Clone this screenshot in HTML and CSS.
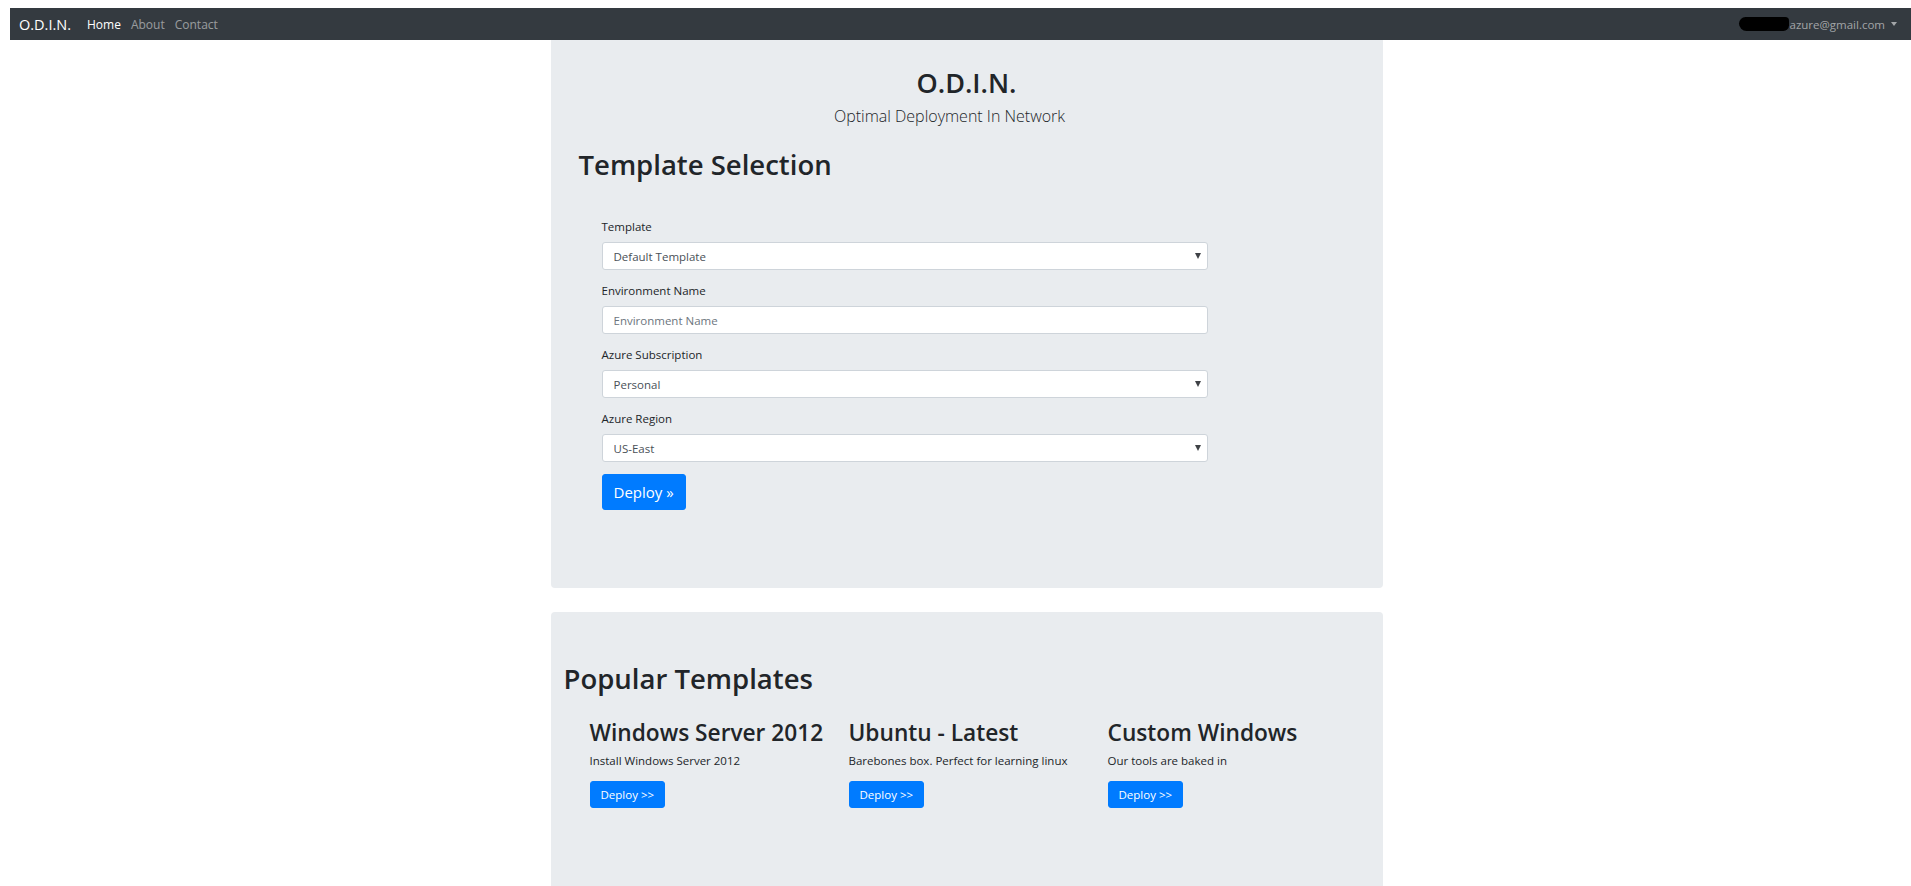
FILE: index.html
```html
<!DOCTYPE html>
<html lang="en">
<head>
    <meta charset="UTF-8">
    <meta name="viewport" content="width=device-width, initial-scale=1.0">
    <title>O.D.I.N.</title>
    <link rel="stylesheet" href="styles.css">
</head>
<body>
    <nav class="navbar">
        <a class="brand" href="#">O.D.I.N.</a>
        <ul class="nav-links">
            <li><a class="active" href="#">Home</a></li>
            <li><a href="#">About</a></li>
            <li><a href="#">Contact</a></li>
        </ul>
        <div class="user">
            <span class="redact"></span>azure@gmail.com<span class="caret"></span>
        </div>
    </nav>

    <main class="container">
        <section class="jumbotron selection">
            <div class="hero">
                <h1>O.D.I.N.</h1>
                <p class="lead">Optimal Deployment In Network</p>
            </div>
            <h2>Template Selection</h2>

            <form class="deploy-form">
                <div class="form-group">
                    <label for="template">Template</label>
                    <div class="select-wrap">
                        <select id="template" class="form-control">
                            <option>Default Template</option>
                        </select>
                    </div>
                </div>
                <div class="form-group">
                    <label for="envName">Environment Name</label>
                    <input type="text" id="envName" class="form-control" placeholder="Environment Name">
                </div>
                <div class="form-group">
                    <label for="subscription">Azure Subscription</label>
                    <div class="select-wrap">
                        <select id="subscription" class="form-control">
                            <option>Personal</option>
                        </select>
                    </div>
                </div>
                <div class="form-group">
                    <label for="region">Azure Region</label>
                    <div class="select-wrap">
                        <select id="region" class="form-control">
                            <option>US-East</option>
                        </select>
                    </div>
                </div>
                <button type="button" class="btn btn-lg">Deploy &raquo;</button>
            </form>
        </section>

        <section class="jumbotron popular">
            <h2>Popular Templates</h2>
            <div class="row">
                <div class="col">
                    <h3>Windows Server 2012</h3>
                    <p>Install Windows Server 2012</p>
                    <a class="btn btn-sm" href="#">Deploy &gt;&gt;</a>
                </div>
                <div class="col">
                    <h3>Ubuntu - Latest</h3>
                    <p>Barebones box. Perfect for learning linux</p>
                    <a class="btn btn-sm" href="#">Deploy &gt;&gt;</a>
                </div>
                <div class="col">
                    <h3>Custom Windows</h3>
                    <p>Our tools are baked in</p>
                    <a class="btn btn-sm" href="#">Deploy &gt;&gt;</a>
                </div>
            </div>
        </section>
    </main>
</body>
</html>
```

FILE: styles.css
```css
* {
    margin: 0;
    padding: 0;
    box-sizing: border-box;
}

body {
    margin: 8px 0 0 10px;
    font-family: 'Open Sans', 'Noto Sans', sans-serif;
    font-size: 12px;
    color: #212529;
    background: #fff;
}

a {
    text-decoration: none;
}

/* top bar */
.navbar {
    display: flex;
    align-items: center;
    height: 32px;
    padding: 0 14px 0 9px;
    background-color: #343a40;
}

.brand {
    color: #fff;
    font-size: 14.5px;
    margin-right: 16px;
}

.nav-links {
    display: flex;
    gap: 10px;
    list-style: none;
}

.nav-links a {
    color: rgba(255, 255, 255, 0.5);
    font-size: 12px;
}

.nav-links a.active {
    color: #fff;
}

.user {
    margin-left: auto;
    display: flex;
    align-items: center;
    color: rgba(255, 255, 255, 0.55);
    font-size: 11.5px;
}

.redact {
    width: 50px;
    height: 14px;
    margin-right: 1px;
    background: #000;
    border-radius: 7px 4px 6px 8px;
}

.caret {
    margin-left: 6px;
    border-top: 4px solid rgba(255, 255, 255, 0.55);
    border-left: 3px solid transparent;
    border-right: 3px solid transparent;
}

/* page */
.container {
    width: 832px;
    margin: 0 auto;
    position: relative;
    left: 6px;
}

.jumbotron {
    background-color: #e9ecef;
    border-radius: 4px;
}

.selection {
    border-radius: 0 0 4px 4px;
    padding: 26px 28px 78px;
}

.hero {
    text-align: center;
}

h1 {
    font-size: 27px;
    font-weight: 600;
    line-height: 34px;
    margin-bottom: 6px;
}

.lead {
    font-size: 16px;
    font-weight: 300;
    line-height: 20px;
    margin-bottom: 22px;
    padding-right: 34px;
}

h2 {
    font-size: 27.5px;
    font-weight: 600;
    line-height: 34px;
}

.deploy-form {
    width: 606px;
    margin: 36px 0 0 23px;
}

.form-group {
    margin-bottom: 12px;
}

.form-group label {
    display: block;
    line-height: 18px;
    margin-bottom: 6px;
    font-size: 11.5px;
}

.form-control {
    display: block;
    width: 100%;
    height: 28px;
    padding: 0 11px;
    font-family: inherit;
    font-size: 11.5px;
    color: #495057;
    background: #fff;
    border: 1px solid #ced4da;
    border-radius: 3px;
    appearance: none;
    -webkit-appearance: none;
}

.form-control::placeholder {
    color: #6c757d;
}

.select-wrap {
    position: relative;
}

.select-wrap::after {
    content: "";
    position: absolute;
    right: 7px;
    top: 11px;
    border-top: 6px solid #3f4246;
    border-left: 3px solid transparent;
    border-right: 3px solid transparent;
}

.btn {
    display: inline-block;
    color: #fff;
    background-color: #007bff;
    border: 1px solid #007bff;
    border-radius: 3px;
    font-family: inherit;
}

.btn-lg {
    height: 36px;
    padding: 0 11px;
    font-size: 15px;
}

.btn-sm {
    height: 27px;
    line-height: 25px;
    padding: 0 10px;
    font-size: 11.5px;
}

/* popular templates */
.popular {
    margin-top: 24px;
    padding: 50px 13px 80px;
    min-height: 290px;
}

.row {
    display: flex;
    margin: 23px 0 0 26px;
}

.col {
    width: 259px;
}

h3 {
    font-size: 22.7px;
    font-weight: 600;
    line-height: 28px;
    margin-bottom: 5px;
}

.col p {
    line-height: 18px;
    margin-bottom: 11px;
    font-size: 11.5px;
}
```
